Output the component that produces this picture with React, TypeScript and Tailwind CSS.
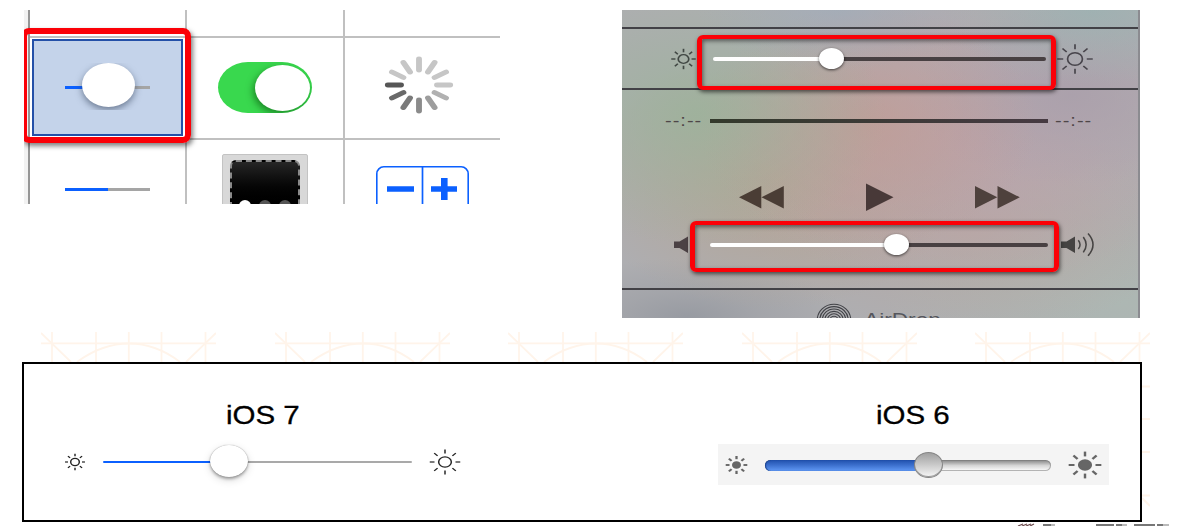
import React from "react";

type SunProps = {
  w: number;
  h: number;
  stretch: number;
  disc: number;
  inner: number;
  outer: number;
  stroke: number;
  color: string;
  filled?: boolean;
  className?: string;
};

function Sun({ w, h, stretch, disc, inner, outer, stroke, color, filled, className }: SunProps) {
  return (
    <svg width={w} height={h} viewBox={`${-w / 2} ${-h / 2} ${w} ${h}`} className={className}>
      <g transform={`scale(${stretch} 1)`} stroke={color} strokeWidth={stroke}>
        <circle r={disc} fill={filled ? color : "none"} />
        {[0, 45, 90, 135, 180, 225, 270, 315].map((a) => (
          <line key={a} x1={inner} x2={outer} transform={`rotate(${a})`} />
        ))}
      </g>
    </svg>
  );
}

const spokes = ["#c6c6c6", "#b1b1b1", "#9d9d9d", "#8b8b8b", "#7a7a7a", "#696969", "#565656", "#c6c6c6", "#c6c6c6", "#c6c6c6", "#c6c6c6", "#c6c6c6"];

function Spinner() {
  return (
    <svg width="72" height="60" viewBox="-36 -30 72 60" className="mt-[17px] ml-[38px]">
      <g transform="scale(1.2 1)" strokeWidth="4.9" strokeLinecap="round">
        {spokes.map((c, i) => (
          <line key={i} x1="15" x2="26" stroke={c} transform={`rotate(${i * 30})`} />
        ))}
      </g>
    </svg>
  );
}

function Palette() {
  return (
    <section className="relative h-[194px] w-[476px] shrink-0 overflow-hidden">
      <div className="grid grid-cols-[6px_157px_158px_155px] grid-rows-[28px_102px_64px]">
        <div className="row-span-3 border-r-2 border-[#969696] bg-[#f2f2f2]" />
        <div className="border-r-2 border-b-2 border-[#c0c0c0]" />
        <div className="border-r-2 border-b-2 border-[#c0c0c0]" />
        <div className="border-b-2 border-[#c0c0c0]" />

        <div className="border-r-2 border-b-2 border-[#c0c0c0] pt-px pl-[2px]">
          <div className="relative flex h-[97px] w-[151px] items-center border-2 border-[#2450a8] bg-[#c4d3ea] pl-[31px]">
            <div className="flex h-[3px] w-[85px]">
              <div className="w-[43px] bg-[#0b60ff]" />
              <div className="flex-1 bg-[#a5a5a5]" />
            </div>
            <div className="absolute top-[22px] left-[37px] h-[47px] w-[74px] overflow-hidden">
              <div className="ml-[11px] h-[44px] w-[53px] rounded-[50%] bg-white shadow-[0_3px_7px_rgba(50,65,90,0.6)]" />
            </div>
          </div>
        </div>
        <div className="border-r-2 border-b-2 border-[#c0c0c0] pt-[24px] pl-[31px]">
          <div className="flex h-[51px] w-[94px] items-center justify-end overflow-hidden rounded-[30px/25.5px] bg-[#39d84e] pr-[2px]">
            <div className="h-[46px] w-[55px] rounded-[50%] bg-white shadow-[-2px_3px_7px_rgba(0,60,0,0.5)]" />
          </div>
        </div>
        <div className="border-b-2 border-[#c0c0c0]">
          <Spinner />
        </div>

        <div className="border-r-2 border-[#c0c0c0] pt-[48px] pl-[35px]">
          <div className="flex h-[3px] w-[85px]">
            <div className="w-[43px] bg-[#0b60ff]" />
            <div className="flex-1 bg-[#a5a5a5]" />
          </div>
        </div>
        <div className="overflow-hidden border-r-2 border-[#c0c0c0] pt-[14px] pl-[35px]">
          <div className="h-[60px] w-[86px] rounded-t-[2px] border border-[#c3c3c3] bg-[#d8d8d8] px-[7px] pt-[5px]">
            <div className="flex h-[60px] justify-center gap-[8px] rounded-t-[6px] border-2 border-dashed border-[#8a8a8a] bg-linear-to-b from-[#262626] to-[#000] to-80% pt-[38px]">
              <div className="size-[12px] rounded-full bg-white" />
              <div className="size-[12px] rounded-full bg-[#555]" />
              <div className="size-[12px] rounded-full bg-[#555]" />
            </div>
          </div>
        </div>
        <div className="overflow-hidden pt-[26px] pl-[31px]">
          <svg width="93" height="50" viewBox="0 0 93 50" fill="none" stroke="#0b60ff">
            <rect x="0.8" y="0.8" width="91.4" height="60" rx="7" strokeWidth="1.6" />
            <path d="M46.5 1V50" strokeWidth="1.7" />
            <path d="M11 23H38M55 23H81" strokeWidth="5.6" />
            <path d="M68.3 12V34" strokeWidth="6.6" />
          </svg>
        </div>
      </div>
      <div className="absolute top-[18px] -left-[3px] h-[115px] w-[170px] rounded-[8px] border-6 border-[#fb0007] shadow-[2px_3px_5px_rgba(0,0,0,0.5)]" />
    </section>
  );
}

function PanelSlider({ before, after, thumb }: { before: number; after: number; thumb: string }) {
  return (
    <div className="relative flex h-[4px]">
      <div className="rounded-l-full bg-white" style={{ width: before }} />
      <div className="rounded-r-full bg-[#484042]" style={{ width: after }} />
      <div className={`absolute h-[21px] w-[25px] rounded-[50%] bg-white shadow-[0_1px_3px_rgba(0,0,0,0.65)] ${thumb}`} />
    </div>
  );
}

function Time() {
  return (
    <span className="inline-block w-[29px] origin-left scale-x-[1.25] text-[16px] leading-[16px] tracking-[0.8px] whitespace-nowrap text-[#4e4648]">
      --:--
    </span>
  );
}

function ControlCenter() {
  return (
    <section className="relative ml-[122px] h-[308px] w-[518px] shrink-0 overflow-hidden border-r-2 border-[#8b8b90] bg-[#aeaeb1] bg-[radial-gradient(ellipse_140px_60px_at_215px_0px,#a0acbab0,#a0acba50_50%,#a0acba00),radial-gradient(ellipse_150px_75px_at_470px_0px,#9cb2b2d0,#9cb2b260_50%,#9cb2b200),radial-gradient(ellipse_190px_130px_at_75px_105px,#9bb39ad0,#9bb39a70_45%,#9bb39a00),radial-gradient(ellipse_170px_120px_at_245px_115px,#c19c94c0,#c19c9470_45%,#c19c9400),radial-gradient(ellipse_160px_90px_at_450px_85px,#a99fabd0,#a99fab60_50%,#a99fab00),radial-gradient(ellipse_260px_150px_at_340px_125px,#bca2acd0,#bca2ac70_50%,#bca2ac00),radial-gradient(ellipse_190px_130px_at_150px_170px,#b6a28ed0,#b6a28e70_50%,#b6a28e00),radial-gradient(ellipse_220px_110px_at_345px_215px,#b9a69ec0,#b9a69e60_50%,#b9a69e00),radial-gradient(ellipse_160px_60px_at_65px_308px,#92969ed0,#92969e60_45%,#92969e00),radial-gradient(ellipse_240px_140px_at_500px_290px,#adb7b3,#adb7b380_50%,#adb7b300)]">
      <div className="h-[19px] border-b-2 border-[#424146]" />
      <div className="flex h-[61px] items-center border-b-2 border-[#424146] pl-[48px]">
        <Sun w={27} h={22} stretch={1.2} disc={4.4} inner={6.7} outer={10.2} stroke={1.4} color="#404743" />
        <div className="ml-[16px]">
          <PanelSlider before={118} after={215} thumb="-top-[9px] left-[106px]" />
        </div>
        <Sun w={38} h={32} stretch={1.2} disc={6.2} inner={9.8} outer={14.8} stroke={1.4} color="#47444b" className="ml-[10px]" />
      </div>
      <div className="h-[200px] border-b-2 border-[#424146]">
        <div className="flex h-[62px] items-center pl-[43px]">
          <Time />
          <div className="ml-[16px] h-[4px] w-[338px] bg-linear-to-r from-[#333a2c] to-[#463a42]" />
          <div className="ml-[7px] flex">
            <Time />
          </div>
        </div>
        <div className="flex items-center pt-[31px] pl-[117px]">
          <svg width="45" height="28" viewBox="0 0 45 28" fill="#4a3d35">
            <path d="M0 14.300L22.3 3V25.400ZM22.5 14.300L44.800 3V25.400Z" />
          </svg>
          <svg width="28" height="28" viewBox="0 0 28 28" fill="#483938" className="ml-[82px]">
            <path d="M0 0.500L27.500 14.300L0 28Z" />
          </svg>
          <svg width="45" height="28" viewBox="0 0 45 28" fill="#4e413d" className="ml-[81px]">
            <path d="M44.800 14.300L22.5 3V25.400ZM22.3 14.300L0 3V25.400Z" />
          </svg>
        </div>
        <div className="flex items-center pt-[22px] pl-[52px]">
          <svg width="14" height="24" viewBox="0 0 14 24" fill="#4b4144">
            <path d="M0 8.5H5.5L14 3.5V20L5.5 15H0Z" />
          </svg>
          <div className="ml-[22px]">
            <PanelSlider before={186} after={152} thumb="-top-[9px] left-[174px]" />
          </div>
          <svg width="34" height="24" viewBox="0 0 34 24" fill="none" stroke="#454342" strokeWidth="1.5" className="ml-[13px]">
            <path d="M0 8.5H5.5L14 3.5V20L5.5 15H0Z" fill="#454342" stroke="none" />
            <path d="M17.3 7.3Q20.8 11.700 17.3 16M22.3 4Q28 11.700 22.3 19.4M27 0.6Q37 11.700 27 22.8" />
          </svg>
        </div>
      </div>
      <div className="flex h-[27px] pt-[13px] pl-[194px]">
        <svg width="36" height="34" viewBox="-18 -17 36 34" fill="none" stroke="#414247" strokeWidth="1.1">
          {[15.8, 13.4, 11, 8.6, 6.2, 3.8, 1.4].map((r) => (
            <ellipse key={r} rx={r * 1.06} ry={r} />
          ))}
        </svg>
        <span className="ml-[12px] origin-left scale-x-[1.26] pt-[7px] text-[18px] leading-[20px] text-[#55565c]">AirDrop</span>
      </div>
      <div className="absolute top-[25px] left-[75px] h-[55px] w-[359px] rounded-[6px] border-x-5 border-y-4 border-[#fb0007] shadow-[1px_2px_4px_rgba(0,0,0,0.6),inset_1px_2px_4px_rgba(0,0,0,0.5)]" />
      <div className="absolute top-[211px] left-[68px] h-[51px] w-[369px] rounded-[6px] border-x-5 border-y-4 border-[#fb0007] shadow-[1px_2px_4px_rgba(0,0,0,0.6),inset_1px_2px_4px_rgba(0,0,0,0.5)]" />
    </section>
  );
}

function Motif() {
  return (
    <svg width="175" height="30" viewBox="0 0 175 30" fill="none" stroke="#fff4ea" strokeWidth="1.8" className="shrink-0">
      <path d="M0 11.3H175M11 0V30M55 0V30M87.8 0V30M120.500 0V30M164.500 0V30" />
      <path d="M0 1L30 30M175 1L145 30M36 30Q61 11.500 88 11.500T139 30" />
    </svg>
  );
}

function Comparison() {
  return (
    <section className="flex h-[160px] w-[1120px] shrink-0 border-2 border-black bg-white">
      <div className="w-[694px] pt-[37px]">
        <h2 className="ml-[202px] w-[80px] origin-left scale-x-[1.18] text-[25px] leading-[28px] whitespace-nowrap text-black [-webkit-text-stroke:0.3px_black]">iOS 7</h2>
        <div className="mt-[16px] flex h-[34px] items-center pl-[40px]">
          <Sun w={22} h={18} stretch={1.2} disc={3.6} inner={5.8} outer={8.3} stroke={1.2} color="#222" />
          <div className="relative ml-[17px] flex h-[2px] w-[309px]">
            <div className="w-[126px] rounded-l-full bg-[#0b60ff]" />
            <div className="flex-1 rounded-r-full bg-[#a9a9a9]" />
            <div className="absolute -top-[16px] left-[107px] h-[32px] w-[38px] rounded-[50%] bg-white shadow-[0_0_1px_rgba(0,0,0,0.4),0_2px_3px_rgba(0,0,0,0.3),0_3px_8px_rgba(0,0,0,0.15)]" />
          </div>
          <Sun w={34} h={28} stretch={1.22} disc={5.2} inner={8.6} outer={12.5} stroke={1.2} color="#222" className="ml-[16px]" />
        </div>
      </div>
      <div className="pt-[37px]">
        <h2 className="ml-[158px] w-[80px] origin-left scale-x-[1.18] text-[25px] leading-[28px] whitespace-nowrap text-black [-webkit-text-stroke:0.3px_black]">iOS 6</h2>
        <div className="mt-[15px] flex h-[41px] w-[391px] items-center bg-[#f4f4f4] pl-[7px]">
          <Sun w={23} h={20} stretch={1.2} disc={2.8} inner={5.8} outer={9} stroke={1.9} color="#666" filled />
          <div className="relative ml-[17px] mt-px flex h-[11px] w-[286px] rounded-full bg-linear-to-b from-[#858585] via-[#d5d5d5] to-white shadow-[inset_0_0_0_1px_rgba(120,120,120,0.55)]">
            <div className="w-[163px] rounded-l-full bg-linear-to-b from-[#2050ac] via-[#3e72d0] to-[#6199f5] shadow-[inset_1px_0_1px_#1d438e]" />
            <div className="absolute -top-[8px] left-[149px] h-[26px] w-[29px] rounded-[50%] border border-[#858585] bg-linear-to-b from-[#a0a0a0] to-[#f7f7f7] shadow-[inset_0_-1px_0_#999]" />
          </div>
          <Sun w={34} h={28} stretch={1.22} disc={4.8} inner={8.6} outer={13.4} stroke={2} color="#666" filled className="ml-[17px]" />
        </div>
      </div>
    </section>
  );
}

export default function App() {
  return (
    <main className="h-[526px] w-[1198px] overflow-hidden bg-white pt-[10px] font-['Liberation_Sans',Arial,sans-serif]">
      <div className="flex pl-[24px]">
        <Palette />
        <ControlCenter />
      </div>
      <div className="mt-[14px] flex gap-[58.5px] pl-[41px]">
        <Motif />
        <Motif />
        <Motif />
        <Motif />
        <Motif />
      </div>
      <div className="flex pl-[22px]">
        <Comparison />
        <svg width="8" height="160" viewBox="0 0 8 160" fill="none" stroke="#fff4ea" strokeWidth="2">
          <path d="M0 24.500H8M0 57H8M0 90H8M0 133.500H8M0 136L8 144" />
        </svg>
      </div>
      <svg width="1198" height="4" viewBox="0 0 1198 4">
        <path d="M1018 4L1023 2M1022 4L1027 2M1026 4L1031 2M1030 4L1034 2" stroke="#6b4a4c" strokeWidth="1.2" />
        <path d="M1043 2H1051V4H1043ZM1096 2H1114V4H1096ZM1116 2H1122V4H1116ZM1134 2H1155V4H1134ZM1157 2H1163V4H1157Z" fill="#777" />
        <path d="M1051 2H1055V4H1051ZM1122 2H1127V4H1122ZM1163 2H1169V4H1163Z" fill="#bbb" />
      </svg>
    </main>
  );
}
